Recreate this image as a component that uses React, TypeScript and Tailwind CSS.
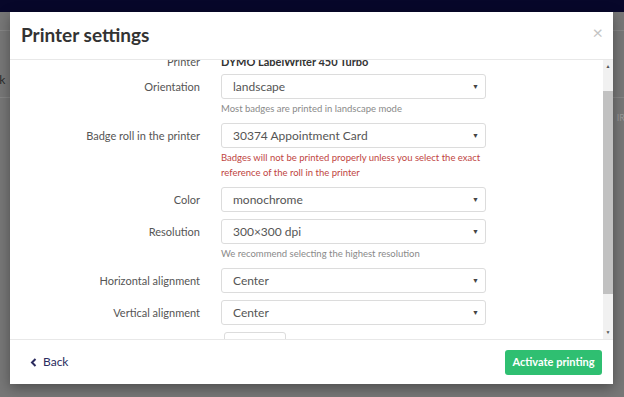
import React from 'react';

type Field = {
    label: string;
    value: string;
    help?: string[];
    error?: boolean;
};

const fields: Field[] = [
    { label: 'Orientation', value: 'landscape', help: ['Most badges are printed in landscape mode'] },
    {
        label: 'Badge roll in the printer',
        value: '30374 Appointment Card',
        help: ['Badges will not be printed properly unless you select the exact', 'reference of the roll in the printer'],
        error: true,
    },
    { label: 'Color', value: 'monochrome' },
    { label: 'Resolution', value: '300×300 dpi', help: ['We recommend selecting the highest resolution'] },
    { label: 'Horizontal alignment', value: 'Center' },
    { label: 'Vertical alignment', value: 'Center' },
];

const SelectBox: React.FC<{ value: string }> = ({ value }) => (
    <div className="w-[265px] h-[25px] border border-[#dcdcdc] rounded-[3px] bg-white flex items-center justify-between pl-[11px] pr-[6px] text-[12px] text-[#555]">
        <span>{value}</span>
        <span className="text-[7px] text-[#444]">▼</span>
    </div>
);

const FieldRow: React.FC<{ field: Field }> = ({ field }) => (
    <div className="flex mb-[7px]">
        <div className="w-[190px] h-[25px] leading-[25px] text-right text-[11px] text-[#555]">{field.label}</div>
        <div className="ml-[21px]">
            <SelectBox value={field.value} />
            {field.help && (
                <div className={`mt-[2px] text-[9.5px] leading-[15px] ${field.error ? 'text-[#c0453f]' : 'text-[#8a8a8a]'}`}>
                    {field.help.map((line) => (
                        <div key={line}>{line}</div>
                    ))}
                </div>
            )}
        </div>
    </div>
);

export default function App() {
    return (
        <div className="relative w-[624px] h-[397px] overflow-hidden bg-[#777777] font-['Lato',sans-serif]">
            {/* page behind the overlay */}
            <div className="h-[12px] bg-[#07072a]" />
            <div className="h-[18px]" />
            <div className="h-px bg-[#858585]" />
            <div className="pt-[40px] text-[12px] text-[#2b2b2b] -ml-[20px]">Back</div>
            <div className="mt-[8px] h-px bg-[#858585]" />
            <div className="absolute right-[-6px] top-[111px] text-[9px] text-[#9a9a9a]">IRE</div>

            {/* modal */}
            <div className="absolute left-[10px] top-[12px] w-[603px] h-[372px] bg-white shadow-[0_4px_12px_rgba(0,0,0,0.35)] flex flex-col">
                <div className="h-[48px] shrink-0 border-b border-[#e8e8e8] flex items-center justify-between pl-[11px] pr-[10px]">
                    <h2 className="text-[19px] font-bold text-[#333]">Printer settings</h2>
                    <span className="text-[18px] leading-none text-[#c4c4c4] -mt-[8px]">×</span>
                </div>

                <div className="flex flex-1 min-h-0">
                    <div className="flex-1 overflow-hidden">
                        <div className="-mt-[8px]">
                            <div className="flex h-[20px] mb-[2px] items-center text-[11px]">
                                <div className="w-[190px] text-right text-[#555]">Printer</div>
                                <div className="ml-[21px] font-bold text-[#333]">DYMO LabelWriter 450 Turbo</div>
                            </div>
                            {fields.map((f) => (
                                <FieldRow key={f.label} field={f} />
                            ))}
                            <div className="flex">
                                <div className="w-[190px]" />
                                <div className="ml-[24px] w-[62px] h-[25px] border border-[#dcdcdc] rounded-[3px]" />
                            </div>
                        </div>
                    </div>
                    {/* scrollbar */}
                    <div className="w-[10px] bg-[#f1f1f1] flex flex-col items-center">
                        <span className="text-[5px] text-[#555] mt-[3px] leading-[6px]">▲</span>
                        <div className="w-full h-[203px] mt-[22px] bg-[#c1c1c1]" />
                        <div className="flex-1" />
                        <span className="text-[5px] text-[#555] mb-[4px] leading-[6px]">▼</span>
                    </div>
                </div>

                <div className="h-[45px] shrink-0 border-t border-[#e8e8e8] flex items-center justify-between pl-[20px] pr-[11px]">
                    <button className="flex items-center gap-[6px] text-[12px] text-[#2b2b5e]">
                        <svg width="7" height="9" viewBox="0 0 7 9">
                            <path d="M5.5 1 L2 4.5 L5.5 8" fill="none" stroke="#2b2b5e" strokeWidth="2" />
                        </svg>
                        Back
                    </button>
                    <button className="w-[97px] h-[25px] rounded-[3px] bg-[#2fbf71] text-white text-[11px] font-bold">
                        Activate printing
                    </button>
                </div>
            </div>
        </div>
    );
}
